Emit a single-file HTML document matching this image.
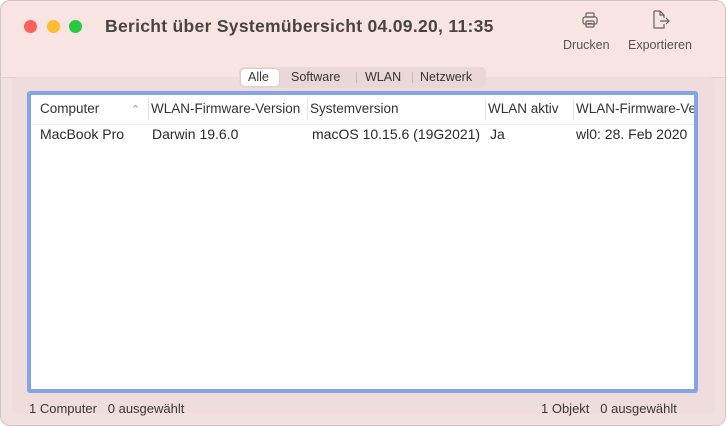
<!DOCTYPE html>
<html><head><meta charset="utf-8"><style>
*{margin:0;padding:0;box-sizing:border-box}
body{width:726px;height:426px;background:#fff;font-family:"Liberation Sans",sans-serif;overflow:hidden;position:relative}
.win{position:absolute;left:0;top:0;width:726px;height:426px;background:#f1e0e0;border:1px solid #cfc4c4;border-radius:10px;overflow:hidden}
.tb{position:absolute;left:0;top:0;width:100%;height:77px;background:#f9e4e4;border-bottom:1px solid #e3cfcf}
.dot{position:absolute;top:19px;width:13px;height:13px;border-radius:50%}
.title{position:absolute;left:104px;top:15px;font-size:17.5px;font-weight:bold;color:#4a4343;letter-spacing:0.3px}
.lbl{position:absolute;top:37px;font-size:12.5px;color:#5a5252}
.panel{position:absolute;left:11px;top:76px;width:703px;height:337px;background:#efdcdc;border-radius:6px}
.seg{position:absolute;left:238px;top:66px;width:247px;height:21px;background:#ead7d7;border-radius:5px;font-size:12.5px;color:#3a3333}
.seg span{position:absolute;top:3px}
.tbl{position:absolute;left:26px;top:90px;width:671px;height:302px;background:#fff;border:4px solid #87a3e8;border-radius:3px}
.hd{position:absolute;top:6px;font-size:13.5px;color:#333;white-space:nowrap}
.cell{position:absolute;top:31px;font-size:14px;color:#2a2a2a;white-space:nowrap}
.sep{position:absolute;top:3px;width:1px;height:22px;background:#e5e5e5}
.st{position:absolute;top:400px;font-size:13px;color:#3c3636;white-space:nowrap}
</style></head><body>
<div class="win">
<div class="tb">
<div class="dot" style="left:23px;background:#fe5f57"></div>
<div class="dot" style="left:46px;background:#febc2e"></div>
<div class="dot" style="left:68px;background:#28c840"></div>
<div class="title">Bericht über Systemübersicht 04.09.20, 11:35</div>
<svg style="position:absolute;left:580px;top:11px" width="18" height="17" viewBox="0 0 18 17" fill="none" stroke="#6a6060" stroke-width="1.2"><rect x="5" y="1" width="8" height="4" rx="1"/><rect x="2" y="5" width="14" height="7" rx="2"/><rect x="5" y="9" width="8" height="6" rx="1"/><line x1="7" y1="11.5" x2="11" y2="11.5"/></svg>
<svg style="position:absolute;left:650px;top:9px" width="20" height="20" viewBox="0 0 20 20" fill="none" stroke="#6a6060" stroke-width="1.2"><path d="M3 1h6l4 4v3M13 14v4H3V1M9 1v4h4"/><path d="M9 11h9M15 8l3 3-3 3"/></svg>
<div class="lbl" style="left:562px">Drucken</div>
<div class="lbl" style="left:627px">Exportieren</div>
</div>
<div class="panel"></div>
<div class="seg">
<div style="position:absolute;left:2px;top:2px;width:38px;height:17px;background:#fff;border-radius:4px;box-shadow:0 0 1px rgba(0,0,0,.3)"></div>
<span style="left:9px">Alle</span><span style="left:52px">Software</span>
<div style="position:absolute;left:117px;top:5px;width:1px;height:11px;background:#cbb"></div>
<span style="left:126px">WLAN</span>
<div style="position:absolute;left:173px;top:5px;width:1px;height:11px;background:#cbb"></div>
<span style="left:181px">Netzwerk</span>
</div>
<div class="tbl">
<div class="hd" style="left:9px">Computer</div>
<div class="hd" style="left:100px;color:#999;font-size:11px;top:8px">⌃</div>
<div class="sep" style="left:117px"></div>
<div class="hd" style="left:120px">WLAN-Firmware-Version</div>
<div class="sep" style="left:276px"></div>
<div class="hd" style="left:279px">Systemversion</div>
<div class="sep" style="left:454px"></div>
<div class="hd" style="left:457px">WLAN aktiv</div>
<div class="sep" style="left:542px"></div>
<div class="hd" style="left:545px;width:118px;overflow:hidden">WLAN-Firmware-Version</div>
<div style="position:absolute;left:0;top:29px;width:100%;height:1px;background:#eee"></div>
<div class="cell" style="left:9px">MacBook Pro</div>
<div class="cell" style="left:121px">Darwin 19.6.0</div>
<div class="cell" style="left:281px">macOS 10.15.6 (19G2021)</div>
<div class="cell" style="left:459px">Ja</div>
<div class="cell" style="left:545px;width:118px;overflow:hidden">wl0: 28. Feb 2020</div>
</div>
<div class="st" style="left:28px">1 Computer&nbsp;&nbsp;&nbsp;0 ausgewählt</div>
<div class="st" style="left:540px">1 Objekt&nbsp;&nbsp;&nbsp;0 ausgewählt</div>
</div>
</body></html>
